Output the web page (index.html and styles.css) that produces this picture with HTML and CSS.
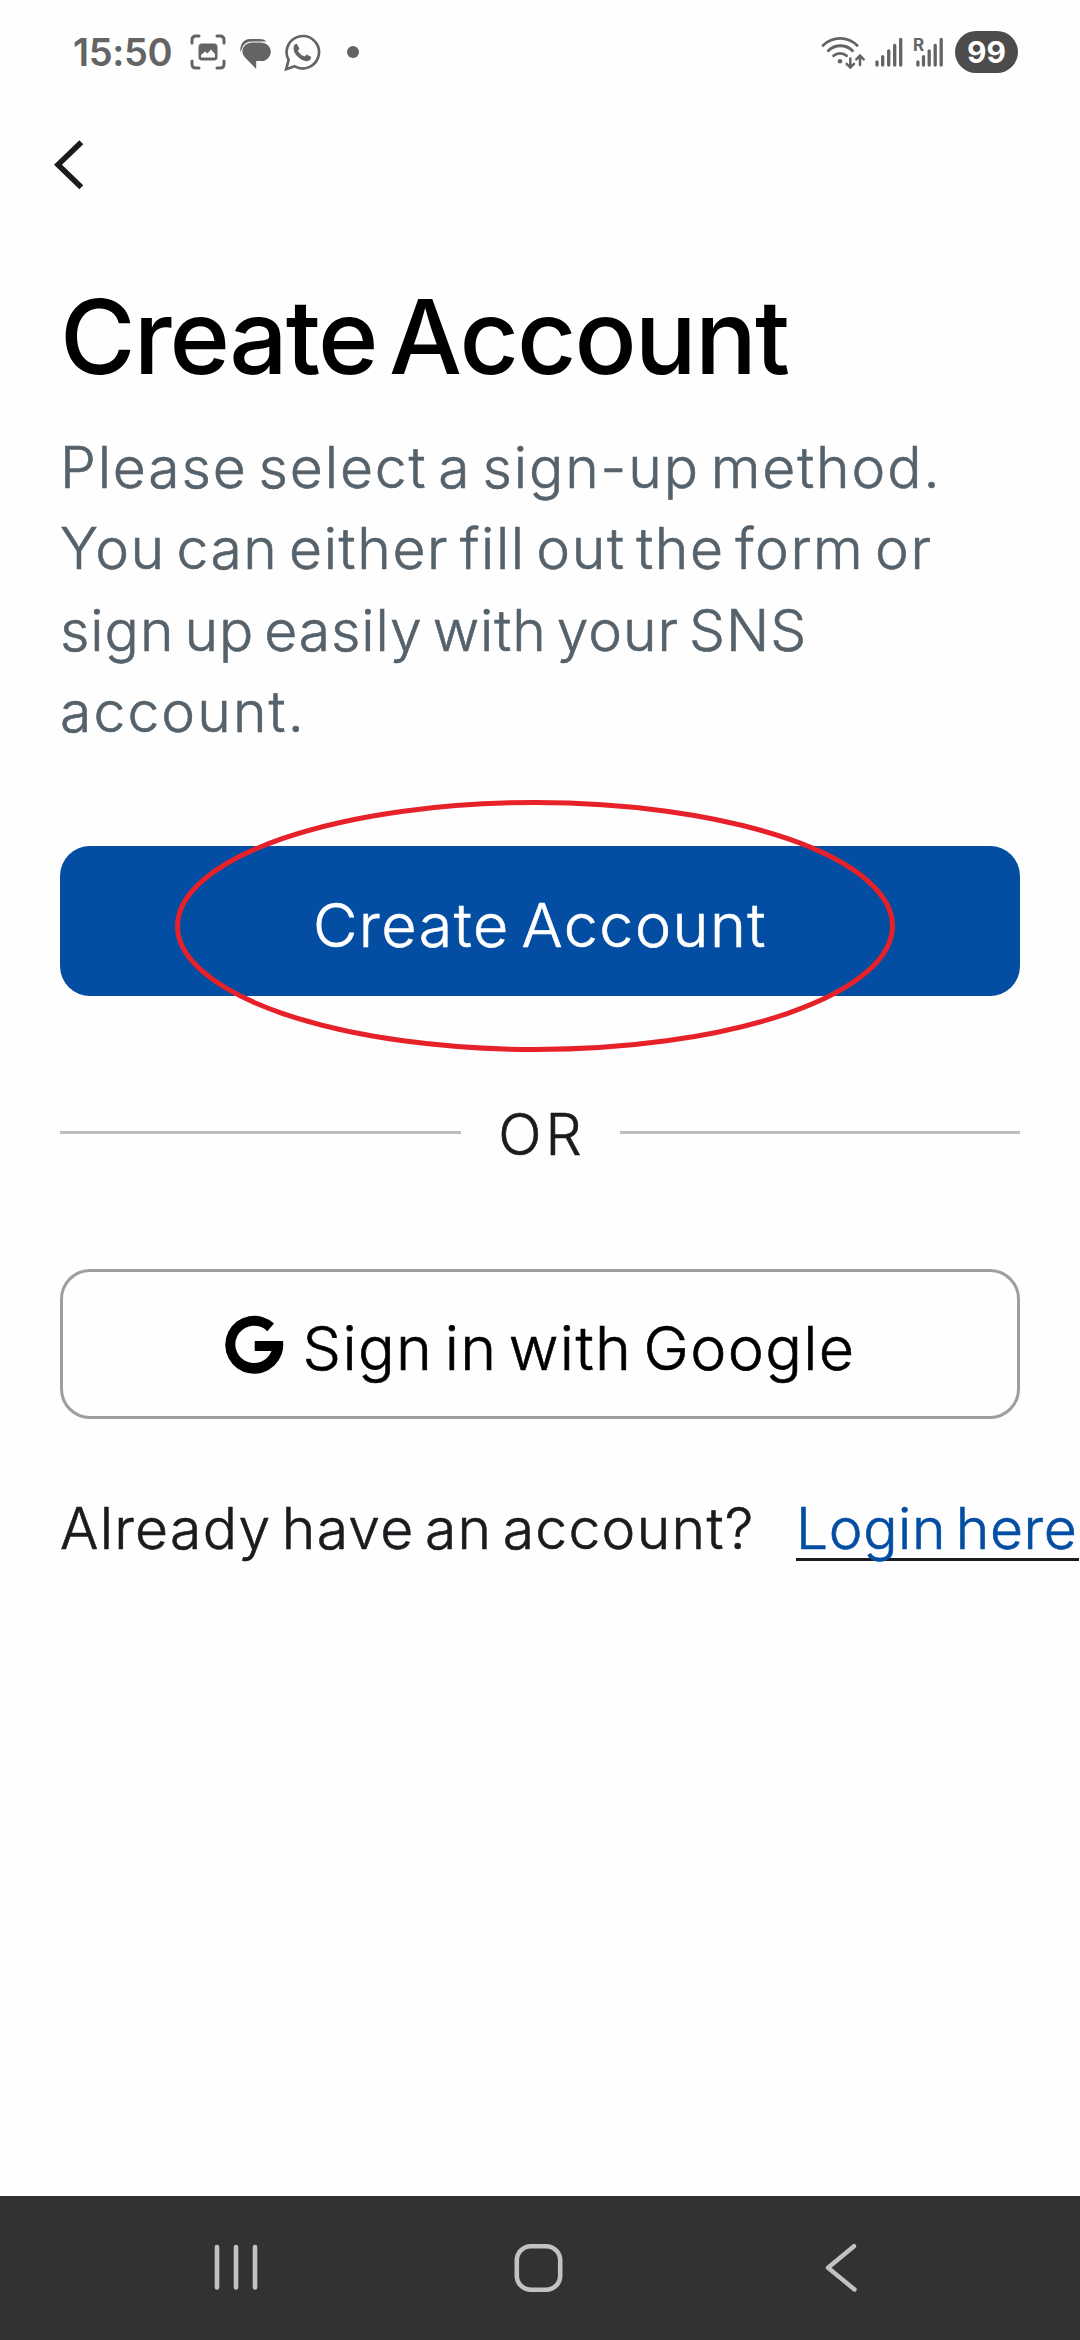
FILE: index.html
```html
<!DOCTYPE html>
<html lang="en">
<head>
<meta charset="utf-8">
<title>Create Account</title>
<link rel="stylesheet" href="styles.css">
</head>
<body>
<div class="screen">
  <header class="status">
    <span class="clock">15:50</span>
    <svg class="ic-shot" width="36" height="36" viewBox="0 0 36 36" fill="none" stroke="#646464" stroke-width="3" stroke-linecap="round">
      <path d="M2 9V6Q2 2 6 2H9M27 2H30Q34 2 34 6V9M34 27V30Q34 34 30 34H27M9 34H6Q2 34 2 30V27"/>
      <rect x="8.5" y="9.5" width="19" height="17" rx="3.5" fill="#646464" stroke="none"/>
      <path d="M11 23.5V21L15 17.5L17.5 19.5L21 15.5L25 20V23.5Z" fill="#fff" stroke="none"/>
    </svg>
    <svg class="ic-msg" width="32" height="32" viewBox="0 0 32 32" fill="#646464">
      <path d="M.3 14C-.3 6 4 1 10 1H20Q24 1 26.5 3.4H12Q3.5 3.6 1.8 11Z"/>
      <path d="M12 4.5H21A9.9 9.3 0 0 1 21 23.1H16.2V31L4.5 19Q2.3 16.5 2.3 13.5A9.5 9 0 0 1 12 4.5Z"/>
    </svg>
    <svg class="ic-wa" width="38" height="38" viewBox="0 0 38 38">
      <path d="M2.2 35.2L4.6 26A16.2 16.2 0 1 1 10.8 32.3Z" fill="none" stroke="#646464" stroke-width="2.7"/>
      <path d="M12.8 9.8L15.3 14.5L13.9 17.2Q16.5 21 20.6 22.6L22.8 20.6L27.2 23Q27 27 22.8 27.2Q17.5 26.8 13 22Q9 17.5 9.6 13Q10.5 9.8 12.8 9.8Z" fill="#646464"/>
    </svg>
    <span class="dot"></span>
    <svg class="ic-wifi" width="46" height="36" viewBox="0 0 46 36" fill="none" stroke="#646464" stroke-width="2.8" stroke-linecap="round">
      <path d="M3 11.5A24 24 0 0 1 37.2 11.5M8.3 16.8A17 17 0 0 1 32.5 16.8M13.6 21.8A10 10 0 0 1 26.6 21.8"/>
      <circle cx="20" cy="27.3" r="2.3" fill="#646464" stroke="none"/>
      <path d="M30.3 24.5V33.3M26.6 29.9L30.3 33.6L34 29.9M40 31V22M36.3 25.3L40 21.6L43.7 25.3" stroke-width="2.5"/>
    </svg>
    <svg class="ic-sig" width="28" height="30" viewBox="0 0 28 30" stroke="#646464" stroke-width="3.3" stroke-linecap="round">
      <path d="M2 25V28M7.7 19.7V28M13.7 14V28M19.7 8.3V28M25.7 2.4V28"/>
    </svg>
    <svg class="ic-roam" width="30" height="30" viewBox="0 0 30 30" stroke="#646464" stroke-width="3.3" stroke-linecap="round">
      <path d="M4.9 25V28M10.5 19.7V28M16.2 14V28M22.2 8.3V28M28.2 2.4V28"/>
      <text x="0" y="14.3" class="roam">R</text>
    </svg>
    <span class="battery">99</span>
  </header>

  <nav class="topnav">
    <svg width="32" height="52" viewBox="0 0 32 52" fill="none" stroke="#1b1b1f" stroke-width="5.6"><path d="M27.3 3.3L4 25.7L27.3 48.2"/></svg>
  </nav>

  <main class="content">
    <h1>Create Account</h1>
    <p class="lead"><span class="l1">Please select a sign-up method.</span><br><span class="l2">You can either fill out the form or</span><br><span class="l3">sign up easily with your SNS</span><br><span class="l4">account.</span></p>
    <div class="primary">
      <button class="btn filled">Create Account</button>
      <svg class="mark" width="720" height="252" viewBox="0 0 720 252"><ellipse cx="360" cy="126" rx="357.5" ry="123.5" fill="none" stroke="#e62129" stroke-width="5"/></svg>
    </div>
    <div class="divider"><i></i><span>OR</span><i></i></div>
    <button class="btn outlined">
      <svg width="60" height="60" viewBox="0 0 60 60"><path d="M49 9.5A29 29 0 1 0 58 27H29.7V37H46.5A18.7 18.7 0 1 1 42.3 17.2Z"/></svg>
      <span>Sign in with Google</span>
    </button>
    <p class="login"><span class="ask">Already have an account?</span><a>Login here</a></p>
  </main>

  <footer class="sysbar">
    <svg width="44" height="52" viewBox="0 0 44 52" stroke="#c2c2c2" stroke-width="4.6" stroke-linecap="round"><path d="M3 5V45.5M22 5V45.5M41 5V45.5"/></svg>
    <svg width="52" height="52" viewBox="0 0 52 52" fill="none" stroke="#c2c2c2" stroke-width="4.6"><rect x="2.8" y="4.3" width="43.4" height="43.4" rx="14"/></svg>
    <svg width="36" height="52" viewBox="0 0 36 52" fill="none" stroke="#c2c2c2" stroke-width="4.4" stroke-linecap="round" stroke-linejoin="round"><path d="M32 4.2L6 25.7L32.5 47.5"/></svg>
  </footer>
</div>
</body>
</html>
```
FILE: styles.css
```css
* { box-sizing: border-box; }
body { margin: 0; background: #fefefe; font-family: Inter, "Liberation Sans", sans-serif; color: #1b1b1f; }
.screen { width: 1080px; height: 2340px; display: flex; flex-direction: column; overflow: hidden; }
svg { display: block; flex: none; }

.status { height: 104px; flex: none; display: flex; align-items: center; padding: 0 62px 0 73px; }
.clock { width: 117px; font-size: 38px; font-weight: 600; letter-spacing: -0.4px; color: #646464; }
.ic-shot { margin-right: 14px; }
.ic-msg { margin: 4px 12px 0 0; }
.ic-wa { margin-top: 1px; }
.dot { width: 12px; height: 12px; border-radius: 50%; background: #646464; margin-left: 25px; }
.ic-wifi { margin-left: auto; margin-right: 9px; }
.ic-sig { margin-right: 10px; }
.ic-roam { margin-right: 12px; overflow: visible; }
.roam { font-size: 17px; font-weight: 700; fill: #646464; stroke: none; }
.battery { width: 63px; height: 42px; border-radius: 21px; background: #4c4c4c; color: #fff; font-size: 30px; font-weight: 700; line-height: 42px; text-align: center; }

.topnav { height: 124px; flex: none; padding: 35px 0 0 54px; }

.content { flex: 1; padding: 44px 0 0 60px; }
h1 { margin: 0; font-size: 103px; font-weight: 500; line-height: 130px; letter-spacing: -1.9px; word-spacing: -13px; color: #000; white-space: nowrap; }
.lead, .btn, .divider span, .login { -webkit-text-stroke: 0.6px currentColor; }
.lead { margin: 25px 0 0; font-size: 57px; font-weight: 300; line-height: 81.3px; color: #56626b; word-spacing: -7px; white-space: nowrap; }
.l1 { letter-spacing: 1.87px; }
.l2 { letter-spacing: 1.6px; }
.l3 { letter-spacing: 0.95px; }
.l4 { letter-spacing: 2.1px; }

.primary { position: relative; width: 960px; margin-top: 94px; }
.mark { position: absolute; left: 115px; top: -46px; }
.btn { width: 960px; height: 150px; border-radius: 30px; display: flex; align-items: center; justify-content: center; font-family: inherit; font-size: 61px; font-weight: 300; word-spacing: -7px; white-space: nowrap; }
.filled { border: 0; background: #034ea2; color: #fff; padding: 8px 0 0; letter-spacing: 1.5px; }
.outlined { background: #fefefe; border: 3px solid #9e9e9e; color: #000; padding: 0; gap: 18px; letter-spacing: 1.3px; }
.outlined span { padding-top: 8px; }

.divider { width: 960px; height: 82px; margin: 95px 0 96px; display: flex; align-items: center; }
.divider i { flex: 1; height: 3px; background: #bdbdbd; }
.divider span { width: 159px; padding: 4px 0 0 4px; text-align: center; font-size: 57px; font-weight: 300; letter-spacing: 4px; }

.login { margin: 75px 0 0; display: flex; font-size: 57px; font-weight: 300; line-height: 70px; word-spacing: -7px; white-space: nowrap; }
.ask { width: 736px; letter-spacing: 1.3px; }
.login a { width: 283px; height: 67px; border-bottom: 3px solid #1b1b1f; color: #034ea2; letter-spacing: 0.6px; }

.sysbar { height: 144px; flex: none; background: #323232; display: flex; align-items: center; padding: 0 222px 0 214px; justify-content: space-between; }
```
